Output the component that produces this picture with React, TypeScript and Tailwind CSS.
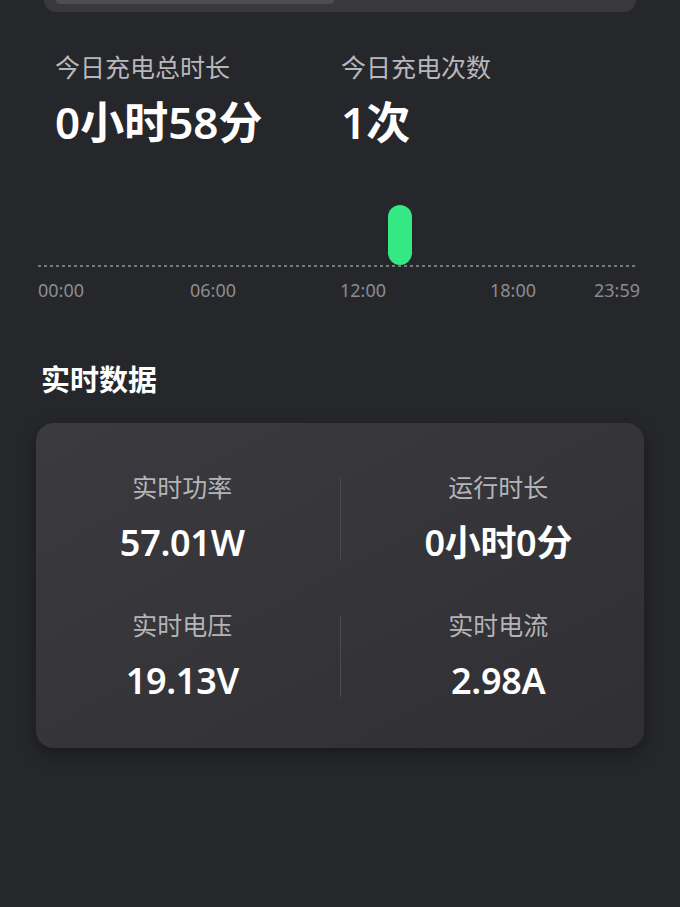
const font = { fontFamily: '"Noto Sans", "Noto Sans CJK SC", sans-serif' };

const ticks = [
  { label: "00:00", w: "w-[152px]" },
  { label: "06:00", w: "w-[150px]" },
  { label: "12:00", w: "w-[150px]" },
  { label: "18:00", w: "w-[104px]" },
  { label: "23:59", w: "" },
];

const Stat = ({ label, value }: { label: string; value: string }) => (
  <div className="flex flex-col items-center">
    <div className="text-[25px] leading-[34px] text-[#b4b4b8]">{label}</div>
    <div className="mt-[16px] text-[36px] leading-[46px] font-semibold text-white tracking-[-0.3px]">{value}</div>
  </div>
);

export default function App() {
  return (
    <div className="min-h-[907px] w-[680px] bg-[#26272b]" style={font}>
      {/* cut-off card on top */}
      <div className="mx-[44px] h-[12px] rounded-b-[22px] bg-[#38383d] pl-[12px]">
        <div className="h-[4px] w-[278px] rounded-b-[16px] bg-[#4d4d53]" />
      </div>

      <div className="flex pl-[55px] pt-[38px]">
        <div className="w-[286px]">
          <div className="text-[25px] leading-[34px] text-[#b8b8bc]">今日充电总时长</div>
          <div className="mt-[12px] text-[44px] leading-[52px] font-semibold text-white">0小时58分</div>
        </div>
        <div>
          <div className="text-[25px] leading-[34px] text-[#b8b8bc]">今日充电次数</div>
          <div className="mt-[12px] text-[44px] leading-[52px] font-semibold text-white">1次</div>
        </div>
      </div>

      {/* timeline */}
      <div className="relative mx-[38px] mt-[57px] h-[60px]">
        <div className="absolute left-[350px] top-0 h-[60px] w-[24px] rounded-full bg-[#34e884]" />
        <svg className="absolute bottom-[-2px] left-0" width="600" height="2">
          <line x1="0" y1="1" x2="600" y2="1" stroke="#77777c" strokeWidth="2" strokeDasharray="3 3" />
        </svg>
      </div>
      <div className="ml-[38px] mt-[14px] flex text-[18px] leading-[22px] text-[#8c8c90]">
        {ticks.map((t) => (
          <div key={t.label} className={t.w}>{t.label}</div>
        ))}
      </div>

      <div className="ml-[41px] mt-[60px] text-[29px] leading-[38px] font-bold text-white">实时数据</div>

      <div className="mx-[36px] mt-[24px] h-[325px] rounded-[18px] bg-gradient-to-br from-[#3a3a3f] to-[#2f2f34] shadow-[0_6px_18px_rgba(0,0,0,0.35)] pt-[47px]">
        <div className="grid grid-cols-[1fr_1px_1fr]">
          <div className="pr-[11px]"><Stat label="实时功率" value="57.01W" /></div>
          <div className="mt-[7px] h-[82px] bg-[#4a4a50]" />
          <div className="pl-[12px]"><Stat label="运行时长" value="0小时0分" /></div>
        </div>
        <div className="mt-[42px] grid grid-cols-[1fr_1px_1fr]">
          <div className="pr-[11px]"><Stat label="实时电压" value="19.13V" /></div>
          <div className="mt-[7px] h-[82px] bg-[#4a4a50]" />
          <div className="pl-[12px]"><Stat label="实时电流" value="2.98A" /></div>
        </div>
      </div>
    </div>
  );
}
